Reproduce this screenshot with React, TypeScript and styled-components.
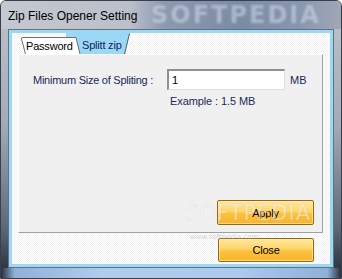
import React, { useState } from 'react';
import styled, { createGlobalStyle } from 'styled-components';

const GlobalStyle = createGlobalStyle`
  html, body {
    margin: 0;
    padding: 0;
    background: #ffffff;
  }
`;

const uiFont = `'Liberation Sans', Arial, sans-serif`;

const StyledWindow = styled.div`
  position: relative;
  display: flex;
  flex-direction: column;
  width: 342px;
  height: 279px;
  box-sizing: border-box;
  border: 1px solid #3a404a;
  border-radius: 6px 6px 0 0;
  overflow: hidden;
  font-family: ${uiFont};
  background: linear-gradient(180deg, #bfc4cc 0%, #a3aab7 45%, #5c6778 82%, #222b39 100%);
`;

const TitleBar = styled.div`
  position: relative;
  display: flex;
  align-items: center;
  height: 26px;
  padding: 2px 0 0 7px;
  overflow: hidden;
  background: linear-gradient(
    90deg,
    #c4c8d0 0%,
    #bac0c9 38%,
    #8c99b0 48%,
    #7c8ba5 70%,
    #8896ae 88%,
    #a0a8b6 100%
  );

  .title {
    position: relative;
    z-index: 1;
    color: #000000;
    font-size: 12px;
  }

  .mark {
    position: absolute;
    left: 150px;
    top: 0;
    font-family: 'DejaVu Sans', sans-serif;
    font-weight: bold;
    font-size: 24px;
    letter-spacing: 2px;
    color: rgba(215, 225, 240, 0.5);
    filter: blur(1.2px);
    white-space: nowrap;
  }
`;

const Middle = styled.div`
  display: flex;
  flex: 1;
  padding: 0 7px 0 7px;
`;

const Client = styled.div`
  display: flex;
  flex-direction: column;
  flex: 1;
  border: 1px solid #69707b;
  padding: 3px;
  background: #9ad8f6;
`;

const Content = styled.div`
  position: relative;
  display: flex;
  flex-direction: column;
  flex: 1;
  background: repeating-conic-gradient(#f2f2f2 0 25%, #ffffff 0 50%) 0 0 / 2px 2px;
`;

const TabStrip = styled.div`
  display: flex;
  align-items: flex-end;
  height: 21px;
  padding-left: 8px;
`;

const StyledTab = styled.button<{ $active?: boolean }>`
  position: relative;
  display: flex;
  align-items: center;
  align-self: flex-start;
  height: ${({ $active }) => ($active ? '21px' : '17px')};
  width: ${({ $active }) => ($active ? '65px' : '61px')};
  margin: ${({ $active }) => ($active ? '0 0 0 -15px' : '4px 0 0 0')};
  padding: ${({ $active }) => ($active ? '3px 0 0 16px' : '1px 0 0 6px')};
  z-index: ${({ $active }) => ($active ? 0 : 1)};
  border: none;
  background: none;
  cursor: default;
  font-family: ${uiFont};
  font-size: 11px;
  letter-spacing: -0.2px;
  color: ${({ $active }) => ($active ? '#14245a' : '#000000')};

  svg {
    position: absolute;
    left: 0;
    top: 0;
    width: 100%;
    height: 100%;
  }

  span {
    position: relative;
  }
`;

const Panel = styled.div`
  position: relative;
  display: flex;
  flex-direction: column;
  height: 179px;
  box-sizing: border-box;
  margin: 0 7px 0 6px;
  border-top: 1px solid #ffffff;
  border-left: 1px solid #ffffff;
  border-right: 1px solid #a0a0a0;
  border-bottom: 1px solid #a0a0a0;
  background: #f0f0f0;

  .mark {
    position: absolute;
    left: 166px;
    top: 146px;
    z-index: 2;
    font-family: 'DejaVu Sans', sans-serif;
    font-size: 21px;
    letter-spacing: 1px;
    color: rgba(255, 255, 255, 0.45);
    -webkit-text-stroke: 0.5px rgba(180, 180, 180, 0.35);
    white-space: nowrap;
    pointer-events: none;
  }
`;

const FormGrid = styled.div`
  display: grid;
  grid-template-columns: 129px 118px auto;
  grid-template-rows: 21px auto;
  column-gap: 5px;
  align-items: center;
  margin: 14px 0 0 14px;
  font-size: 11px;
  color: #1a2a5a;

  label {
    letter-spacing: -0.25px;
  }

  .example {
    grid-column: 2 / 4;
    margin-top: 5px;
    padding-left: 3px;
    letter-spacing: -0.1px;
  }
`;

const SizeInput = styled.input`
  width: 118px;
  height: 21px;
  box-sizing: border-box;
  margin: 0;
  padding: 0 3px;
  border-top: 2px solid #8f8f8f;
  border-left: 2px solid #8f8f8f;
  border-right: 1px solid #e0e0e0;
  border-bottom: 1px solid #e0e0e0;
  background: #ffffff;
  font-family: ${uiFont};
  font-size: 11px;
  color: #000000;
  outline: none;
`;

const ActionButton = styled.button<{ $w: number; $h: number }>`
  width: ${({ $w }) => $w}px;
  height: ${({ $h }) => $h}px;
  box-sizing: border-box;
  padding: 0;
  border: 1px solid #97680d;
  border-radius: 2px;
  background: linear-gradient(180deg, #ffe7a0 0%, #ffd56a 45%, #fcc13e 55%, #f9b42c 100%);
  box-shadow: inset 0 0 0 1px rgba(255, 240, 190, 0.6);
  font-family: ${uiFont};
  font-size: 11px;
  letter-spacing: -0.2px;
  color: #000000;
  cursor: default;
`;

const PanelFooter = styled.div`
  display: flex;
  justify-content: flex-end;
  margin-top: auto;
  padding: 0 8px 7px 0;
`;

const Footer = styled.div`
  position: relative;
  display: flex;
  justify-content: flex-end;
  flex: 1;
  padding: 5px 16px 0 0;

  .mark {
    position: absolute;
    left: 178px;
    top: 0;
    font-family: 'DejaVu Sans', sans-serif;
    font-size: 7px;
    color: rgba(170, 170, 170, 0.5);
  }
`;

const BottomFrame = styled.div`
  height: 10px;
  background: linear-gradient(90deg, #263040 0%, #8fb0d8 4%, #b0cdef 30%, #acc9ee 70%, #8fb0d8 96%, #263040 100%);
`;

const PasswordShape = () => (
  <svg viewBox="0 0 61 17" preserveAspectRatio="none">
    <path
      d="M5.5 17 L1.5 2 Q1.2 0.5 3 0.5 L56 0.5 L60 17"
      fill="#ffffff"
      stroke="#6e6e6e"
      strokeWidth="1"
    />
  </svg>
);

const SplitShape = () => (
  <svg viewBox="0 0 65 21" preserveAspectRatio="none">
    <path d="M0 0 H64 L59 21 H0 Z" fill="#9ad8f6" />
    <path d="M63.5 0.5 L58.5 21" fill="none" stroke="#5e5e5e" strokeWidth="1" />
  </svg>
);

const App: React.FC = () => {
  const [size, setSize] = useState('1');

  return (
    <>
      <GlobalStyle />
      <StyledWindow>
        <TitleBar>
          <span className="mark">SOFTPEDIA</span>
          <span className="title">Zip Files Opener Setting</span>
        </TitleBar>

        <Middle>
          <Client>
            <Content>
              <TabStrip>
                <StyledTab>
                  <PasswordShape />
                  <span>Password</span>
                </StyledTab>
                <StyledTab $active>
                  <SplitShape />
                  <span>Splitt zip</span>
                </StyledTab>
              </TabStrip>

              <Panel>
                <FormGrid>
                  <label htmlFor="split-size">Minimum Size of Spliting :</label>
                  <SizeInput
                    id="split-size"
                    value={size}
                    onChange={(e) => setSize(e.target.value)}
                  />
                  <span>MB</span>
                  <span className="example">Example : 1.5 MB</span>
                </FormGrid>

                <span className="mark">SOFTPEDIA</span>

                <PanelFooter>
                  <ActionButton $w={97} $h={25}>
                    Apply
                  </ActionButton>
                </PanelFooter>
              </Panel>

              <Footer>
                <span className="mark">www.softpedia.com</span>
                <ActionButton $w={96} $h={24}>
                  Close
                </ActionButton>
              </Footer>
            </Content>
          </Client>
        </Middle>

        <BottomFrame />
      </StyledWindow>
    </>
  );
};

export default App;
